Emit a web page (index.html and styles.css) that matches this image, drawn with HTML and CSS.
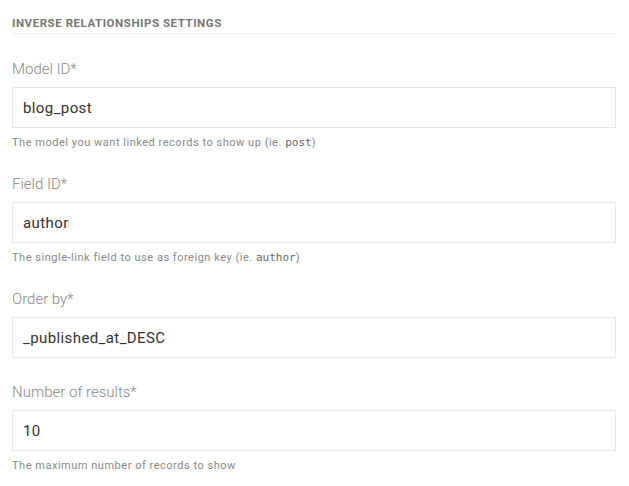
FILE: index.html
```html
<!DOCTYPE html>
<html>
<head>
<meta charset="utf-8">
<link rel="stylesheet" href="styles.css">
</head>
<body>
<div class="panel">
  <div class="section-title">Inverse relationships settings</div>
  <div class="field">
    <div class="label">Model ID*</div>
    <div class="input">blog_post</div>
    <div class="hint">The model you want linked records to show up (ie. <code>post</code>)</div>
  </div>
  <div class="field">
    <div class="label">Field ID*</div>
    <div class="input">author</div>
    <div class="hint">The single-link field to use as foreign key (ie. <code>author</code>)</div>
  </div>
  <div class="field">
    <div class="label">Order by*</div>
    <div class="input">_published_at_DESC</div>
  </div>
  <div class="field">
    <div class="label">Number of results*</div>
    <div class="input">10</div>
    <div class="hint">The maximum number of records to show</div>
  </div>
</div>
</body>
</html>
```
FILE: styles.css
```css
html, body {
  margin: 0;
  padding: 0;
  background: #fff;
}
body {
  font-family: Roboto, "Liberation Sans", sans-serif;
  padding: 16px 13px 0 12px;
}
.panel {
  width: 604px;
}
.section-title {
  font-size: 11.5px;
  line-height: 14px;
  font-weight: 700;
  text-transform: uppercase;
  color: #777;
  padding-bottom: 3px;
  border-bottom: 1px solid #ececec;
  margin-bottom: 24px;
  letter-spacing: 0.55px;
}
.field {
  margin-bottom: 23px;
}
.label {
  font-size: 15px;
  line-height: 20px;
  padding-top: 1px;
  height: 20px;
  font-weight: 300;
  color: #888;
  margin-bottom: 8px;
  box-sizing: content-box;
}
.input {
  height: 39px;
  border: 1px solid #e8e8e8;
  padding: 0 10px;
  display: flex;
  align-items: center;
  font-size: 15px;
  color: #333;
  letter-spacing: 0.4px;
}
.hint {
  padding-top: 7px;
  height: 15px;
  font-size: 11px;
  line-height: 16px;
  color: #888;
  letter-spacing: 0.52px;
}
.hint code {
  font-family: "DejaVu Sans Mono", monospace;
  font-size: 11px;
  line-height: 1;
  letter-spacing: 0;
  color: #666;
}
```
